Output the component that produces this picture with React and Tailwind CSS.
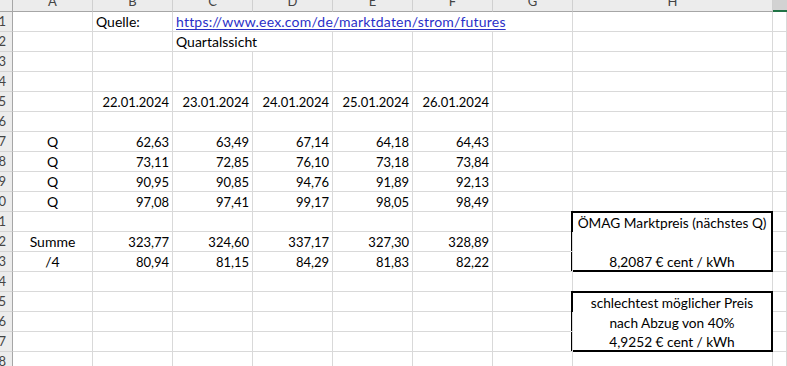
import React from "react";

const FONT = { fontFamily: "Lato, 'Open Sans', sans-serif" };

const COLS = ["A", "B", "C", "D", "E", "F", "G", "H", "I"];

const dates = ["22.01.2024", "23.01.2024", "24.01.2024", "25.01.2024", "26.01.2024"];
const qRows = [
  ["62,63", "63,49", "67,14", "64,18", "64,43"],
  ["73,11", "72,85", "76,10", "73,18", "73,84"],
  ["90,95", "90,85", "94,76", "91,89", "92,13"],
  ["97,08", "97,41", "99,17", "98,05", "98,49"],
];
const summe = ["323,77", "324,60", "337,17", "327,30", "328,89"];
const viertel = ["80,94", "81,15", "84,29", "81,83", "82,22"];

const grid = "border-r border-b border-[#d9d9d9]";

function Cell({ children, align = "left", span = 1, num = false, className = "" }) {
  const al =
    align === "right" ? "justify-end" : align === "center" ? "justify-center" : "justify-start";
  const sp = span === 5 ? "col-span-5" : span === 2 ? "col-span-2" : "";
  const size = num ? "text-[13px]" : "text-[14px]";
  return (
    <div
      className={`h-[20px] flex items-end ${al} px-[3px] pb-[1px] whitespace-nowrap ${size} leading-[16px] text-black ${grid} ${sp} ${className}`}
    >
      {children}
    </div>
  );
}

function RowHead({ n }) {
  return (
    <div className="h-[20px] flex items-center justify-end pr-[6px] overflow-hidden bg-[#ececec] border-r border-r-[#a6a6a6] border-b border-b-[#d4d4d4] text-[13px] leading-none text-[#444]">
      {n}
    </div>
  );
}

function Box({ lines }) {
  return (
    <div className="row-span-3 -ml-[2px] -mt-[1px] border-2 border-black bg-white flex flex-col">
      {lines.map((l, i) => (
        <div
          key={i}
          className={`${i === 0 ? "h-[18px]" : i === 1 ? "h-[20px]" : "h-[19px]"} flex items-end justify-center text-[13.7px] leading-[16px] text-black whitespace-nowrap`}
        >
          {l}
        </div>
      ))}
    </div>
  );
}

export default function App() {
  const rows = [];
  for (let r = 1; r <= 18; r++) {
    const cells = [];
    cells.push(<RowHead key="rh" n={r} />);
    const add = (el) => cells.push(el);
    if (r === 1) {
      add(<Cell key="A" />);
      add(<Cell key="B">Quelle:</Cell>);
      add(
        <Cell key="C" span={5}>
          <span className="text-[#2a2fc8] underline underline-offset-[2px] tracking-[0.2px]">
            https://www.eex.com/de/marktdaten/strom/futures
          </span>
        </Cell>
      );
      add(<Cell key="H" />);
      add(<Cell key="I" />);
    } else if (r === 2) {
      add(<Cell key="A" />);
      add(<Cell key="B" />);
      add(
        <Cell key="C" span={2}>
          Quartalssicht
        </Cell>
      );
      ["E", "F", "G", "H", "I"].forEach((c) => add(<Cell key={c} />));
    } else {
      let aText = null;
      let vals = null;
      if (r === 5) vals = dates;
      if (r >= 7 && r <= 10) {
        aText = "Q";
        vals = qRows[r - 7];
      }
      if (r === 12) {
        aText = "Summe";
        vals = summe;
      }
      if (r === 13) {
        aText = "/4";
        vals = viertel;
      }
      add(
        <Cell key="A" align="center">
          {aText}
        </Cell>
      );
      ["B", "C", "D", "E", "F"].forEach((c, i) =>
        add(
          <Cell key={c} align="right" num>
            {vals ? vals[i] : null}
          </Cell>
        )
      );
      add(<Cell key="G" />);
      if (r === 11) {
        add(<Box key="H" lines={["ÖMAG Marktpreis (nächstes Q)", "", "8,2087 € cent / kWh"]} />);
      } else if (r === 15) {
        add(
          <Box
            key="H"
            lines={["schlechtest möglicher Preis", "nach Abzug von 40%", "4,9252 € cent / kWh"]}
          />
        );
      } else if (!(r === 12 || r === 13 || r === 16 || r === 17)) {
        add(<Cell key="H" />);
      }
      add(<Cell key="I" />);
    }
    rows.push(<React.Fragment key={r}>{cells}</React.Fragment>);
  }

  return (
    <div className="w-[787px] h-[366px] overflow-hidden bg-white" style={FONT}>
      <div className="grid grid-cols-[13px_80px_80px_80px_80px_80px_80px_80px_200px_1fr]">
        <div className="h-[12px] bg-[#ececec] border-r border-r-[#a6a6a6] border-b border-b-[#a6a6a6]" />
        {COLS.map((c) =>
          c === "I" ? (
            <div key={c} className="h-[12px] bg-[#d2d2d2] border-b-2 border-b-[#217346]" />
          ) : (
            <div
              key={c}
              className="h-[12px] overflow-hidden flex items-end justify-center bg-[#ececec] border-b border-b-[#a6a6a6] border-r border-r-[#d0d0d0]"
            >
              <span className="text-[13px] leading-[13px] text-[#444] pb-[3px]">{c}</span>
            </div>
          )
        )}
        {rows}
      </div>
    </div>
  );
}
